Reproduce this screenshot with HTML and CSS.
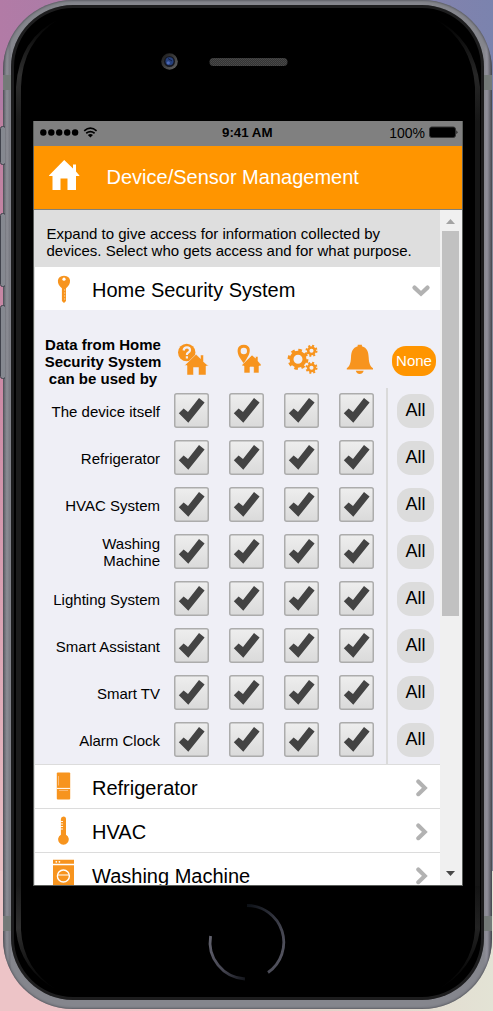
FILE: index.html
```html
<!DOCTYPE html>
<html lang="en">
<head>
<meta charset="utf-8">
<title>Device/Sensor Management</title>
<link rel="stylesheet" href="styles.css">
</head>
<body>
<svg width="0" height="0" class="defs">
  <defs>
    <linearGradient id="face" x1="0" y1="0" x2="0" y2="1"><stop offset="0" stop-color="#eeeeee"/><stop offset="1" stop-color="#dadada"/></linearGradient>
    <symbol id="check" viewBox="0 0 35 35"><rect x=".75" y=".75" width="33.5" height="33.5" rx="2" fill="url(#face)" stroke="#acacac" stroke-width="1.5"/><path d="M4.8 20.3 9.6 15.6 14 18.9 25 4.9 30.6 9.5 14.3 29.8Z" fill="#434343"/></symbol>
    <symbol id="house" viewBox="0 0 31 30"><path d="M0 15.5 15.2 0 24 8.5V4.6h3v7L30.4 15.5V16H27V30H18.5V18.5h-7V30H3.5V16H0Z"/></symbol>
    <symbol id="next" viewBox="0 0 12 18"><path d="M2.3 2.5 8.8 8.9 2.3 15.2" fill="none" stroke="#b2b2b2" stroke-width="4.1" stroke-linecap="round"/></symbol>
  </defs>
</svg>
<div class="stage">
  <svg class="buttons" viewBox="0 0 5 270" width="5" height="270">
    <g fill="#858890" stroke="#40424c" stroke-width="1"><rect x=".5" y="6.5" width="5" height="38" rx="2"/><rect x=".5" y="93.5" width="5" height="73" rx="2"/><rect x=".5" y="185.5" width="5" height="73" rx="2"/></g>
  </svg>
  <div class="phone">
    <div class="glass">
      <svg class="top" viewBox="0 0 472 116" width="472" height="116">
        <defs>
          <pattern id="mesh" width="2" height="2" patternUnits="userSpaceOnUse"><rect width="2" height="2" fill="#343434"/><rect width="1" height="1" fill="#4a4a4a"/><rect x="1" y="1" width="1" height="1" fill="#444"/></pattern>
          <linearGradient id="rim" x1="0" y1="0" x2="1" y2="1"><stop offset="0" stop-color="#151515"/><stop offset="1" stop-color="#686868"/></linearGradient>
          <linearGradient id="shine" x1="0" y1="0" x2="0" y2="1"><stop offset="0" stop-color="#000"/><stop offset=".55" stop-color="#303030"/><stop offset="1" stop-color="#1c1c1c"/></linearGradient>
        </defs>
        <path d="M48 14Q8 33 5 82V116H10V82Q11 37 48 14Z" fill="url(#shine)"/>
        <path d="M424 14Q464 33 469 82V116H464V82Q461 37 424 14Z" fill="url(#shine)" opacity=".8"/>
        <circle cx="158.5" cy="56.5" r="8.3" fill="url(#rim)"/><circle cx="158.5" cy="56.5" r="5.5" fill="#151720"/><circle cx="158.5" cy="56.3" r="4" fill="#26407c"/><circle cx="157.3" cy="57.8" r="1.6" fill="#4c68b4"/><path d="M157 53.5 161 56" stroke="#101c40"/>
        <rect x="198.5" y="53" width="78" height="8" rx="4" fill="url(#mesh)"/>
      </svg>
      <main class="screen">
        <div class="status">
          <svg width="59" height="14" viewBox="0 0 59 14"><g fill="#000"><circle cx="3.3" cy="6.5" r="3.2"/><circle cx="11.3" cy="6.5" r="3.2"/><circle cx="19.2" cy="6.5" r="3.2"/><circle cx="27.2" cy="6.5" r="3.2"/><circle cx="35.1" cy="6.5" r="3.2"/><path d="M47.8 9 50.4 11.6 53 9Q50.4 7.2 47.8 9Z"/></g><path d="M46.2 7.2Q50.4 4 54.6 7.2M44.2 4.8Q50.4-.4 56.6 4.8" fill="none" stroke="#000" stroke-width="1.7"/></svg>
          <b class="time">9:41 AM</b>
          <span class="charge">100%</span>
          <svg width="29" height="14" viewBox="0 0 29 14"><rect x=".5" y="1" width="26" height="10.5" rx="2.2" fill="#000" stroke="#333"/><path d="M27.5 4.3Q29.2 6.2 27.5 8.2Z"/></svg>
        </div>
        <header class="bar"><svg class="home" width="31" height="30" fill="#fff"><use href="#house"/></svg><h1>Device/Sensor Management</h1></header>
        <div class="view">
          <div class="content">
            <p class="intro">Expand to give access for information collected by<br>devices. Select who gets access and for what purpose.</p>
            <div class="item open">
              <svg class="pic" width="30" height="30" viewBox="0 0 30 30"><path d="M15 1.8C7 1.8 7.5 10.5 12.9 14.3V27L15 29 17 27V14.3C22.5 10.5 23 1.8 15 1.8Z" fill="#f7941e"/><circle cx="15" cy="5.2" r="1.6" fill="#fff"/><path d="M15.7 15V27" stroke="#fbc98d" stroke-width=".8" stroke-dasharray="2 1"/></svg>
              <span>Home Security System</span>
              <svg class="down" width="18" height="12" viewBox="0 0 18 12"><path d="M2.5 2.6 9 8.7 15.5 2.6" fill="none" stroke="#b2b2b2" stroke-width="4.2" stroke-linecap="round"/></svg>
            </div>
            <section class="panel">
              <div class="heads">
                <b>Data from Home<br>Security System<br>can be used by</b>
                <div class="icons">
                  <svg width="35" height="34" viewBox="0 0 35 34" fill="#f7941e"><circle cx="12.7" cy="9.5" r="8.7"/><path d="M9.6 7.5Q10 4.3 13 4.3T16 7.2Q16 8.8 14 9.8 12.8 10.5 12.9 12M12.9 13.2V15.6" fill="none" stroke="#efeff6" stroke-width="2.2"/><path d="M10.5 22.5 22 11.3 26.5 15.5V12h3v6.8L34.5 23H32v9H24.5v-7.5h-5V32H13v-9.5Z" stroke="#efeff6" stroke-width=".5"/></svg>
                  <svg width="35" height="34" viewBox="0 0 35 34" fill="#f7941e"><path d="M14.9 1.8C7.5 1.8 7.5 9 10.5 14.3L14.9 20.8 18.3 14.5C22.5 8.5 21.5 1.8 14.9 1.8Z"/><circle cx="14.8" cy="8" r="3.2" fill="#efeff6"/><path d="M13 21.7 23 12 26.5 15V13.4H29V18L32 21.5V23H30V30H24.6V24H21V30H15V23H13Z" stroke="#efeff6" stroke-width=".6"/></svg>
                  <svg width="35" height="34" viewBox="0 0 35 34" fill="none" stroke="#f7941e"><circle cx="14" cy="16.3" r="6.5" stroke-width="4"/><circle cx="14" cy="16.3" r="9.1" stroke-width="2.7" stroke-dasharray="3.6 3.55"/><circle cx="27.5" cy="7.8" r="3.3" stroke-width="2.5"/><circle cx="27.5" cy="7.8" r="5" stroke-width="2" stroke-dasharray="2 1.93"/><circle cx="27.5" cy="24.8" r="3.3" stroke-width="2.5"/><circle cx="27.5" cy="24.8" r="5" stroke-width="2" stroke-dasharray="2 1.93"/></svg>
                  <svg width="35" height="34" viewBox="0 0 35 34" fill="#f7941e"><path d="M18.7 3.2V1.7H22.9V3.2C28 4.7 29.5 8.5 29.7 14.5 29.9 20.5 31.5 23.5 34 25.2V26.4H7.8V25.2C10.3 23.5 11.8 20.5 12 14.5 12.2 8.5 13.7 4.7 18.7 3.2ZM16.8 27.7H24.7Q23.5 31 20.7 31T16.8 27.7Z"/></svg>
                </div>
                <span class="none">None</span>
              </div>
              <div class="line"><label>The device itself</label><div class="checks"><svg><use href="#check"/></svg><svg><use href="#check"/></svg><svg><use href="#check"/></svg><svg><use href="#check"/></svg></div><div class="end"><span>All</span></div></div>
              <div class="line"><label>Refrigerator</label><div class="checks"><svg><use href="#check"/></svg><svg><use href="#check"/></svg><svg><use href="#check"/></svg><svg><use href="#check"/></svg></div><div class="end"><span>All</span></div></div>
              <div class="line"><label>HVAC System</label><div class="checks"><svg><use href="#check"/></svg><svg><use href="#check"/></svg><svg><use href="#check"/></svg><svg><use href="#check"/></svg></div><div class="end"><span>All</span></div></div>
              <div class="line"><label>Washing<br>Machine</label><div class="checks"><svg><use href="#check"/></svg><svg><use href="#check"/></svg><svg><use href="#check"/></svg><svg><use href="#check"/></svg></div><div class="end"><span>All</span></div></div>
              <div class="line"><label>Lighting System</label><div class="checks"><svg><use href="#check"/></svg><svg><use href="#check"/></svg><svg><use href="#check"/></svg><svg><use href="#check"/></svg></div><div class="end"><span>All</span></div></div>
              <div class="line"><label>Smart Assistant</label><div class="checks"><svg><use href="#check"/></svg><svg><use href="#check"/></svg><svg><use href="#check"/></svg><svg><use href="#check"/></svg></div><div class="end"><span>All</span></div></div>
              <div class="line"><label>Smart TV</label><div class="checks"><svg><use href="#check"/></svg><svg><use href="#check"/></svg><svg><use href="#check"/></svg><svg><use href="#check"/></svg></div><div class="end"><span>All</span></div></div>
              <div class="line"><label>Alarm Clock</label><div class="checks"><svg><use href="#check"/></svg><svg><use href="#check"/></svg><svg><use href="#check"/></svg><svg><use href="#check"/></svg></div><div class="end"><span>All</span></div></div>
            </section>
            <div class="item"><svg class="pic" width="30" height="30" viewBox="0 0 30 30"><rect x="7.8" y="1.5" width="13.4" height="27" rx="1" fill="#f7941e"/><path d="M7.8 17.4H21.2" stroke="#fff" stroke-width="1"/><path d="M9.5 5V14.5M10 19.4H19" stroke="#fbc184" stroke-width=".9"/></svg><span>Refrigerator</span><svg class="next" width="12" height="18"><use href="#next"/></svg></div>
            <div class="item"><svg class="pic" width="30" height="30" viewBox="0 0 30 30"><path d="M11.9 4Q12 1.5 14.5 1.5T17 4V19.7A5.3 5.3 0 1 1 11.9 19.7Z" fill="#f7941e"/><path d="M11.5 6.5H14M11.5 9H14M11.5 11.5H14M11.5 14H14" stroke="#fff" stroke-width=".9"/></svg><span>HVAC</span><svg class="next" width="12" height="18"><use href="#next"/></svg></div>
            <div class="item"><svg class="pic" width="30" height="30" viewBox="0 0 30 30"><path d="M4 .7H25V4.8H4ZM4 6.3H25V30H4Z" fill="#f7941e"/><circle cx="7.3" cy="2.8" r=".9" fill="#fff"/><circle cx="10.4" cy="2.8" r=".9" fill="#fff"/><circle cx="14.4" cy="17" r="6" fill="none" stroke="#fff" stroke-width="1.4"/><path d="M8.9 16H20" stroke="#fff" stroke-width="1"/></svg><span>Washing Machine</span><svg class="next" width="12" height="18"><use href="#next"/></svg></div>
          </div>
          <div class="scroll"><svg width="17" height="21" viewBox="0 0 17 21"><path d="M4 14 8.5 9 13 14Z" fill="#a3a3a3"/></svg><div class="thumb"></div><svg class="dn" width="17" height="21" viewBox="0 0 17 21"><path d="M4 7H13L8.5 12Z" fill="#484848"/></svg></div>
        </div>
      </main>
      <svg class="bottom" viewBox="0 0 472 114" width="472" height="114">
        <defs>
          <linearGradient id="ring" x1="0" y1="0" x2="1" y2=".8"><stop offset="0" stop-color="#0c1016"/><stop offset=".5" stop-color="#30323c"/><stop offset="1" stop-color="#565662"/></linearGradient>
          <linearGradient id="ring2" x1="0" y1="0" x2="1" y2="1"><stop offset="0" stop-color="#62626e"/><stop offset=".6" stop-color="#444450"/><stop offset="1" stop-color="#14161c"/></linearGradient>
          <linearGradient id="fade" x1="0" y1="0" x2="0" y2="1"><stop offset="0" stop-color="#1c1c1c"/><stop offset=".4" stop-color="#303030"/><stop offset="1" stop-color="#000"/></linearGradient>
        </defs>
        <path d="M5 0H10V44Q12 83 46 104Q9 84 5 44Z" fill="url(#fade)"/><path d="M469 0H464V44Q461 83 426 104Q463 84 469 44Z" fill="url(#fade)" opacity=".7"/>
        <path d="M236 19.5A36.8 36.8 0 0 1 257 86.5" fill="none" stroke="url(#ring)" stroke-width="2.8"/>
        <path d="M199.6 50A36.8 36.8 0 0 0 234 93" fill="none" stroke="url(#ring2)" stroke-width="2.8"/>
      </svg>
    </div>
  </div>
</div>
</body>
</html>
```
FILE: styles.css
```css
*{box-sizing:border-box}
body{margin:0;width:493px;height:1011px;overflow:hidden;font-family:"Liberation Sans",Arial,sans-serif;color:#000}
.defs{position:absolute}
svg{display:block;flex:none}
.stage{position:relative;height:1011px;padding-left:3px;overflow:hidden;background:linear-gradient(90deg,#b27ba6,#7b83ae) top/100% 110px no-repeat,linear-gradient(90deg,#edc4c7 0 25%,#e2d2c9 65%,#e3e3d5) bottom/100% 140px no-repeat,linear-gradient(90deg,transparent 50%,#858898 50%),linear-gradient(#b77b9f,#cd8ba6 400px,#e9bdc2 850px)}
.buttons{position:absolute;left:0;top:120px}
.phone{width:489px;height:1009px;padding:5px 8px 9px;border-radius:70px;background:linear-gradient(90deg,#63646c 0,#8c8d95 4px,#777880 7px,#85868d 8px,#85868d 481px,#92919c 484px,#51525b 489px);box-shadow:inset 0 0 3px #34363d}
.phone::before,.phone::after{content:"";position:absolute;left:3px;top:75px;width:489px;height:15px;background:#747a78}
.phone::after{top:916px}
.glass{position:relative;z-index:1;width:473px;height:995px;border-radius:62px;background:linear-gradient(90deg,transparent 5px,#1c1c1c 5px 10px,transparent 10px 464px,#161616 464px 469px,transparent 469px) 0 116px/100% 765px no-repeat #000;box-shadow:inset 0 0 0 3px #1d1d1e;overflow:hidden}
.screen{width:430px;height:765px;margin-left:22px;border:1px solid #5b5e5b;border-width:0 1px 1px;overflow:hidden;background:#fff}
.status{height:25px;background:#808080;display:flex;align-items:center;padding:0 4px 2px 6px;font-size:14px}
.time{margin-left:123px;font-size:13.3px;width:52px;white-space:nowrap}
.charge{margin-left:auto;margin-right:4px}
.bar{height:64px;background:#ff9500;border-bottom:1px solid #80807b;display:flex;align-items:center;padding:0 0 5px 15px}
.bar h1{font-size:20px;font-weight:400;color:#fff;margin:0 0 0 26.5px;padding-top:4px;white-space:nowrap}
.view{height:675px;display:flex;overflow:hidden}
.content{width:406px;flex:none;border-left:1px solid #ddd}
.intro{height:57px;margin:0;background:#dedede;padding:15px 0 0 11.5px;font-size:15px;line-height:17px;white-space:nowrap}
.item{height:44px;background:#fff;border-top:1px solid #dcdcdc;display:flex;align-items:center;padding:0 12px 1px 14px;font-size:20px}
.item span{margin-left:13px;padding-top:5px}
.item.open{height:43px;border-top:0;padding:0 10px 0 14px}
.item.open span{padding-top:4px}
.item svg:last-child{margin-left:auto}
.item .next{margin-top:3px}
.item .down{margin-top:5px}
.panel{height:454px;background:#efeff6}
.heads{height:78px;display:flex;padding-top:26px}
.heads b{width:136px;font-size:15px;line-height:17px;text-align:center;white-space:nowrap}
.icons{display:flex;gap:20px;padding:7px 0 0 3px}
.none{margin:10px 0 0 18px;width:44px;height:30px;border-radius:14px;background:#ff9500;color:#fff;font-size:15px;line-height:30px;text-align:center}
.line{display:flex;height:47px}
.line label{width:125px;height:47px;display:flex;align-items:center;justify-content:flex-end;text-align:right;font-size:15px;line-height:17px;padding-bottom:1px;white-space:nowrap}
.checks{display:flex;gap:20px;padding:5px 0 0 14px}
.checks svg{width:35px;height:35px}
.end{margin-left:12px;width:54px;border-left:2px solid #dadada;padding:6px 0 0 9px}
.end span{display:block;width:37px;height:34px;border-radius:14px;background:#dcdcdc;font-size:18px;line-height:33px;text-align:center}
.scroll{width:22px;background:#f0f0f0;padding-left:2px;display:flex;flex-direction:column}
.thumb{width:17px;height:385px;background:#c1c1c1}
.dn{margin-top:auto}
```
